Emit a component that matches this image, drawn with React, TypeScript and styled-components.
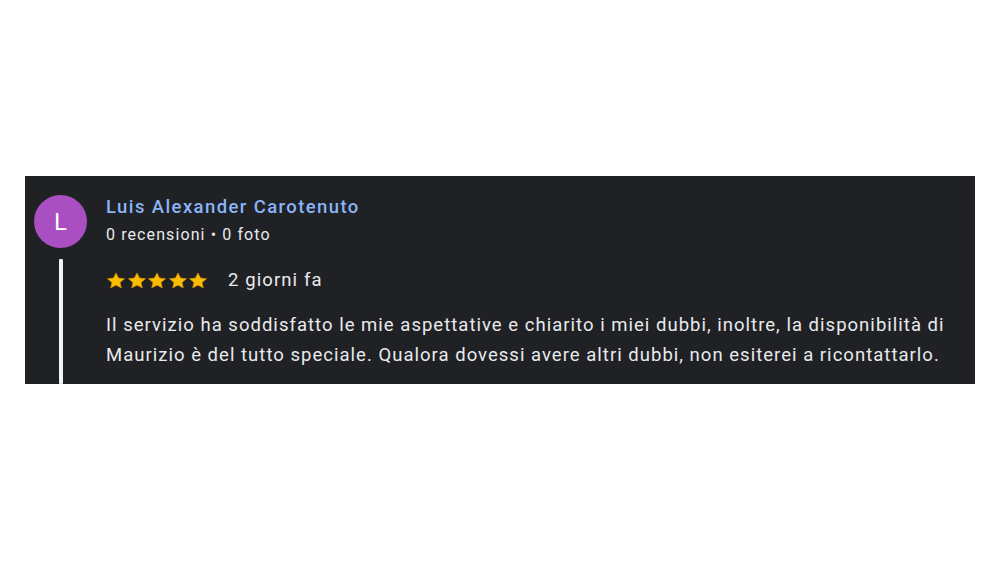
import React from 'react';
import styled, { createGlobalStyle } from 'styled-components';

const GlobalStyle = createGlobalStyle`
  html, body {
    margin: 0;
    padding: 0;
    background: #ffffff;
  }
  body {
    font-family: Roboto, 'Noto Sans', Arial, sans-serif;
  }
`;

const Page = styled.div`
  width: 1000px;
  height: 562px;
  padding: 176px 25px 0;
  box-sizing: border-box;
`;

const Card = styled.div`
  display: flex;
  gap: 19px;
  height: 208px;
  box-sizing: border-box;
  padding: 19px 0 0 9px;
  background: #202124;
  color: #e8eaed;
`;

const Side = styled.div`
  display: flex;
  flex-direction: column;
  align-items: center;
  width: 53px;
  flex-shrink: 0;
`;

const Avatar = styled.div<{ $bg: string }>`
  width: 53px;
  height: 53px;
  border-radius: 50%;
  background: ${p => p.$bg};
  color: #fff;
  display: flex;
  align-items: center;
  justify-content: center;
  font-size: 24px;
  font-weight: 400;
`;

const Thread = styled.div`
  flex: 1;
  width: 4px;
  margin-top: 11px;
  background: #f1f3f4;
  border-radius: 1px;
`;

const Body = styled.div`
  display: flex;
  flex-direction: column;
`;

const Name = styled.div`
  font-size: 18.5px;
  font-weight: 500;
  line-height: 24px;
  letter-spacing: 1.4px;
  color: #8ab4f8;
`;

const Meta = styled.div`
  margin-top: 5px;
  font-size: 16px;
  line-height: 22px;
  letter-spacing: 1.1px;
  color: #e8eaed;
`;

const RatingRow = styled.div`
  display: flex;
  align-items: center;
  gap: 20px;
  margin-top: 22px;
  height: 24px;
`;

const Stars = styled.div`
  display: flex;
  gap: 0.5px;
`;

const When = styled.span`
  font-size: 18.5px;
  line-height: 24px;
  letter-spacing: 1.1px;
`;

const Text = styled.p`
  margin: 18px 0 0;
  font-size: 18.5px;
  line-height: 30px;
  letter-spacing: 1.02px;
  color: #e8eaed;
  max-width: 855px;
`;

function Star() {
  return (
    <svg width="20" height="17" viewBox="0 0 24 22" preserveAspectRatio="none">
      <path
        d="M12 1.2l3.1 6.6 7.2.8-5.4 4.9 1.5 7.1L12 17l-6.4 3.6 1.5-7.1L1.7 8.6l7.2-.8z"
        fill="#fbbc04"
        stroke="#c98f00"
        strokeWidth="0.8"
        strokeLinejoin="round"
      />
    </svg>
  );
}

export default function App() {
  return (
    <>
      <GlobalStyle />
      <Page>
        <Card>
          <Side>
            <Avatar $bg="#a94fc2">L</Avatar>
            <Thread />
          </Side>
          <Body>
            <Name>Luis Alexander Carotenuto</Name>
            <Meta>0 recensioni • 0 foto</Meta>
            <RatingRow>
              <Stars>
                {[0, 1, 2, 3, 4].map(i => (
                  <Star key={i} />
                ))}
              </Stars>
              <When>2 giorni fa</When>
            </RatingRow>
            <Text>
              Il servizio ha soddisfatto le mie aspettative e chiarito i miei dubbi, inoltre, la disponibilità di
              Maurizio è del tutto speciale. Qualora dovessi avere altri dubbi, non esiterei a ricontattarlo.
            </Text>
          </Body>
        </Card>
      </Page>
    </>
  );
}
